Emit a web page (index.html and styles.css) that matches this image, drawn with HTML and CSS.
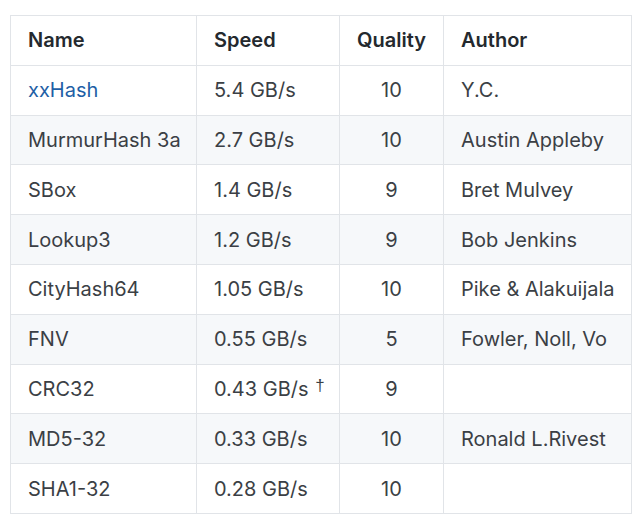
FILE: index.html
```html
<!DOCTYPE html>
<html>
<head>
<meta charset="utf-8">
<link rel="stylesheet" href="styles.css">
</head>
<body>
<table class="hash-table">
  <colgroup>
    <col class="c-name"><col class="c-speed"><col class="c-quality"><col class="c-author">
  </colgroup>
  <thead>
    <tr><th>Name</th><th>Speed</th><th class="center">Quality</th><th>Author</th></tr>
  </thead>
  <tbody>
    <tr><td><a href="#">xxHash</a></td><td>5.4 GB/s</td><td class="center">10</td><td>Y.C.</td></tr>
    <tr><td>MurmurHash 3a</td><td>2.7 GB/s</td><td class="center">10</td><td>Austin Appleby</td></tr>
    <tr><td>SBox</td><td>1.4 GB/s</td><td class="center">9</td><td>Bret Mulvey</td></tr>
    <tr><td>Lookup3</td><td>1.2 GB/s</td><td class="center">9</td><td>Bob Jenkins</td></tr>
    <tr><td>CityHash64</td><td>1.05 GB/s</td><td class="center">10</td><td>Pike &amp; Alakuijala</td></tr>
    <tr><td>FNV</td><td>0.55 GB/s</td><td class="center">5</td><td>Fowler, Noll, Vo</td></tr>
    <tr><td>CRC32</td><td>0.43 GB/s <sup>†</sup></td><td class="center">9</td><td></td></tr>
    <tr><td>MD5-32</td><td>0.33 GB/s</td><td class="center">10</td><td>Ronald L.Rivest</td></tr>
    <tr><td>SHA1-32</td><td>0.28 GB/s</td><td class="center">10</td><td></td></tr>
  </tbody>
</table>
</body>
</html>
```
FILE: styles.css
```css
html, body {
  margin: 0;
  padding: 0;
  background: #ffffff;
}
body {
  padding: 15px 0 0 10px;
  font-family: "Inter", "Liberation Sans", sans-serif;
  font-size: 20px;
  color: #3b3f45;
}
.hash-table {
  border-collapse: collapse;
  table-layout: fixed;
  width: 621px;
}
.c-name { width: 186px; }
.c-speed { width: 143px; }
.c-quality { width: 104px; }
.c-author { width: 188px; }
.hash-table th,
.hash-table td {
  border: 1px solid #e1e4e8;
  height: 48.8px;
  padding: 0 0 0 17px;
  text-align: left;
  white-space: nowrap;
  vertical-align: middle;
}
.hash-table th {
  font-weight: 600;
  color: #24292e;
}
.hash-table th.center,
.hash-table td.center {
  text-align: center;
  padding: 0;
}
.hash-table tbody tr:nth-child(even) {
  background: #f6f8fa;
}
.hash-table a {
  color: #1f5fa6;
  text-decoration: none;
}
.hash-table sup {
  font-family: "Liberation Sans", sans-serif;
  font-size: 17px;
  vertical-align: 5px;
  line-height: 0;
  margin-left: 1px;
}
```
